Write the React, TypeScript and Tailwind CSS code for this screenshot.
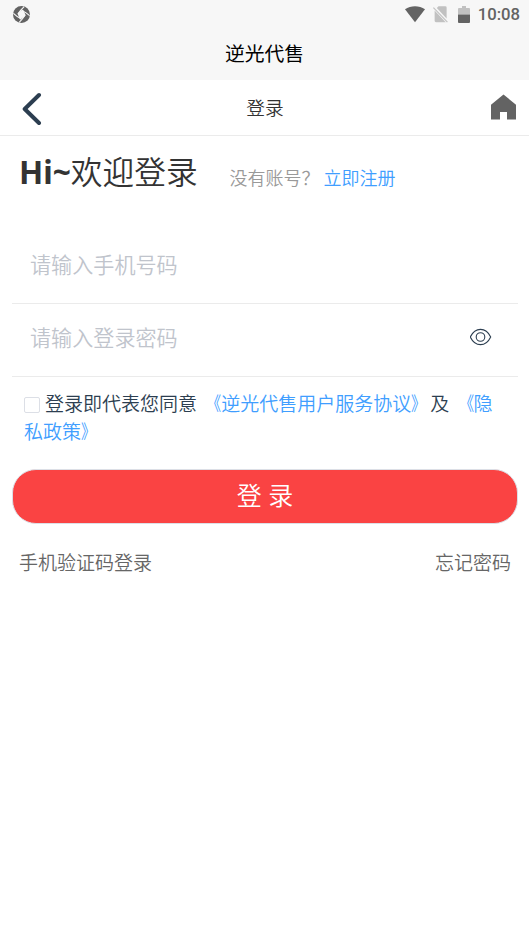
import { ReactNode, useState } from 'react';

function StatusBar() {
  return (
    <div className="flex h-[29px] items-center justify-between pl-[13px] pr-[9px]">
      <svg className="h-[17px] w-[17px]" viewBox="0 0 17 17">
        <circle cx="8.5" cy="8.5" r="8.5" fill="#636363" />
        <path d="M5.2 7.6 L9.6 4.4 L12 9.2 L7.4 12.8 Z" fill="#f7f7f7" stroke="#f7f7f7" strokeWidth="1.4" strokeLinejoin="round" />
        <path d="M5.6 7 Q7.6 4 11.2 0.6 M9.8 5 Q13 6.4 16.6 9.6 M11.6 9.8 Q9.6 13 6.2 16.4 M7.2 12.2 Q4 10.8 0.4 7.4" stroke="#f7f7f7" strokeWidth="1.2" fill="none" />
      </svg>
      <div className="flex items-center">
        <svg className="h-[17px] w-[20px]" viewBox="0 0 20 17">
          <path d="M0 3.3 C5.8 -0.9 14.2 -0.9 20 3.3 L10 16.2 Z" fill="#636363" />
        </svg>
        <svg className="ml-[8px] h-[17px] w-[15px]" viewBox="0 0 15 17">
          <path d="M5.5 0.3 H12.4 Q13.6 0.3 13.6 1.5 V12.4 L3.8 2.1 Z" fill="#c1c1c1" />
          <path d="M1.6 4.5 L12.7 16.2 H3 Q1.6 16.2 1.6 14.8 Z" fill="#c1c1c1" />
          <path d="M0.4 1.6 L14.4 16.2" stroke="#c1c1c1" strokeWidth="1.2" />
        </svg>
        <svg className="ml-[10px] h-[18px] w-[12px]" viewBox="0 0 12 18">
          <path d="M4 0 H8 V2 H11 Q12 2 12 3 V8.5 H0 V3 Q0 2 1 2 H4 Z" fill="#c1c1c1" />
          <path d="M0 8.5 H12 V16 Q12 17 11 17 H1 Q0 17 0 16 Z" fill="#636363" />
        </svg>
        <span className="ml-[8px] font-[Roboto] text-[16.7px] leading-[20px] font-medium text-[#636363]">10:08</span>
      </div>
    </div>
  );
}

function NavBar() {
  return (
    <div className="flex h-[56px] items-center border-b border-[#ebebeb] pl-[22px] pr-[13px]">
      <div className="flex-1">
        <svg className="mt-[3px] h-[34px] w-[26px]" viewBox="0 0 26 34">
          <path d="M17 3 L2.7 17 L17 31" fill="none" stroke="#2c3e50" strokeWidth="4" strokeLinecap="round" strokeLinejoin="round" />
        </svg>
      </div>
      <h1 className="mr-[8px] pb-[2px] text-[18.7px] leading-[28px] text-[#333]">登录</h1>
      <div className="flex flex-1 justify-end">
        <svg className="-mt-[2px] h-[26px] w-[26px]" viewBox="0 0 26 26">
          <path d="M13.5 0.5 L26 10.8 V25.5 H17 V18 H10 V25.5 H1 V10.8 Z" fill="#636363" />
        </svg>
      </div>
    </div>
  );
}

// Title marks are drawn narrow, hugging the name they enclose
function PolicyLink({ children }: { children: ReactNode }) {
  return (
    <a className="text-[#409eff]">
      <span className="inline-block origin-right scale-x-[0.78]">《</span>
      {children}
      <span className="inline-block origin-left scale-x-[0.78]">》</span>
    </a>
  );
}

export default function App() {
  const [phone, setPhone] = useState('');
  const [password, setPassword] = useState('');
  const [visible, setVisible] = useState(false);
  const [agreed, setAgreed] = useState(false);

  return (
    <div
      lang="zh-CN"
      className="h-[940px] w-[529px] overflow-hidden bg-white font-['Noto_Sans_CJK_SC',sans-serif] font-[350]"
    >
      <header className="h-[80px] bg-[#f7f7f7]">
        <StatusBar />
        <div className="flex h-[48px] items-center justify-center text-[19.8px] font-normal text-black">逆光代售</div>
      </header>
      <NavBar />

      <main className="pl-[12px] pr-[11px]">
        {/* Welcome */}
        <div className="flex h-[94px] items-start pl-[7px] pt-[9px]">
          <h2 className="text-[31.7px] leading-[50px] text-[#333]">
            <span className="font-['Noto_Sans',sans-serif] font-bold">Hi~</span>欢迎登录
          </h2>
          <p className="ml-[32px] mt-[19px] text-[18px] leading-[27px] text-[#999]">
            没有账号？ <a className="text-[#409eff]">立即注册</a>
          </p>
        </div>

        {/* Form */}
        <div className="flex h-[74px] items-center border-b border-[#ebebeb] pb-[5px] pl-[18px]">
          <input
            className="h-[50px] w-full text-[21.1px] outline-none placeholder:text-[#c0c4cc]"
            placeholder="请输入手机号码"
            value={phone}
            onChange={(e) => setPhone(e.target.value)}
          />
        </div>
        <div className="flex h-[73px] items-center border-b border-[#ebebeb] pb-[6px] pl-[18px] pr-[26px]">
          <input
            className="h-[50px] min-w-0 flex-1 text-[21.1px] outline-none placeholder:text-[#c0c4cc]"
            type={visible ? 'text' : 'password'}
            placeholder="请输入登录密码"
            value={password}
            onChange={(e) => setPassword(e.target.value)}
          />
          <button className="-mt-[1px]" onClick={() => setVisible(!visible)}>
            <svg className="h-[18px] w-[22px]" viewBox="0 0 22 18" fill="none" stroke="#2c3e50" strokeWidth="1.1">
              <path d="M0.3 9 C5.2 -1.2 15.8 -1.2 20.7 9 C15.8 19.2 5.2 19.2 0.3 9 Z" />
              <circle cx="10.5" cy="9" r="4.3" />
            </svg>
          </button>
        </div>

        {/* Agreement */}
        <div className="mt-[12px] pl-[12px] pr-[20px] text-[19px] leading-[28px] [word-spacing:1px] text-[#2c3e50]">
          <input
            type="checkbox"
            className="mr-[5px] inline-block h-[16px] w-[16px] appearance-none rounded-[2px] border border-[#dcdfe6] align-[-2px] checked:bg-[#409eff]"
            checked={agreed}
            onChange={(e) => setAgreed(e.target.checked)}
          />
          登录即代表您同意 <PolicyLink>逆光代售用户服务协议</PolicyLink>及 <PolicyLink>隐私政策</PolicyLink>
        </div>

        <button className="mt-[24px] block h-[55px] w-full rounded-[24px] border border-[#dcdfe6] bg-[#fa4343] pb-[3px] text-[25px] [word-spacing:1px] text-white">
          登 录
        </button>

        <div className="mt-[24px] flex justify-between px-[7px] text-[19px] leading-[28px] text-[#666]">
          <a>手机验证码登录</a>
          <a>忘记密码</a>
        </div>
      </main>
    </div>
  );
}
